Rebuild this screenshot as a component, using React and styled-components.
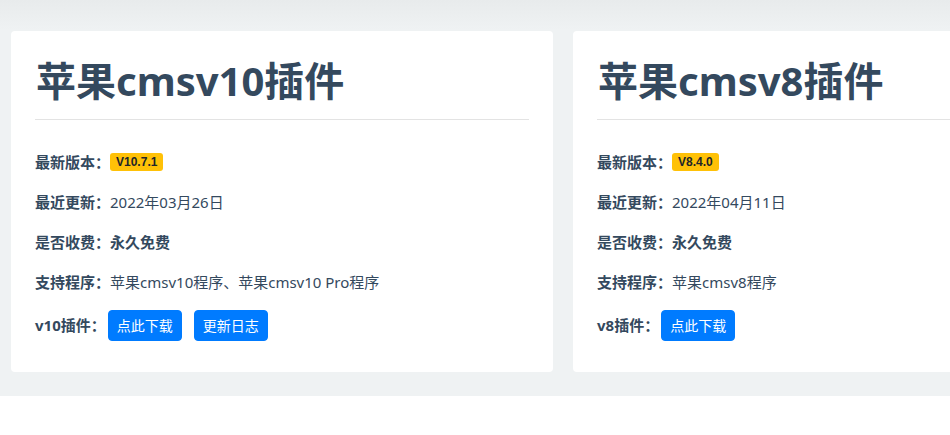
import React from 'react'
import styled, { createGlobalStyle } from 'styled-components'

const GlobalStyle = createGlobalStyle`
    html, body{
        margin: 0;
        padding: 0;
        background: #fff;
        overflow: hidden;
    }
    body{
        font-family: "Noto Sans", "Noto Sans CJK SC", sans-serif;
        font-size: 15px;
        color: #34495e;
    }
`;

const Section = styled.section`
    background: linear-gradient(180deg, #e8ebec 0px, #eff2f3 30px, #eff2f3 100%);
    padding: 31px 0 24px 11px;
`;
const CardTrack = styled.div`
    display: flex;
    gap: 20px;
`;
const Card = styled.div`
    flex: 0 0 542px;
    box-sizing: border-box;
    background: #fff;
    border-radius: 4px;
    padding: 24px;
`;
const Title = styled.h1`
    margin: 0 0 12px;
    font-size: 40px;
    line-height: 52px;
    font-weight: 700;
    color: #34495e;
    padding-left: 1px;
`;
const Divider = styled.hr`
    margin: 0 0 22px;
    border: 0;
    border-top: 1px solid #e3e3e3;
`;
const Row = styled.div`
    display: flex;
    align-items: center;
    height: ${p => p.$tall ? '46px' : '40px'};
    line-height: 22px;
`;
const Label = styled.span`
    font-weight: 700;
`;
const Value = styled.span`
    font-weight: ${p => p.$bold ? 700 : 400};
`;
const Badge = styled.span`
    display: inline-block;
    background: #ffc107;
    color: #212529;
    font-family: "Liberation Sans", Arial, sans-serif;
    font-size: 12px;
    font-weight: 700;
    line-height: 18px;
    padding: 0 6px;
    border-radius: 3px;
`;
const Buttons = styled.div`
    display: flex;
    gap: 12px;
    margin-left: 2px;
`;
const Button = styled.a`
    display: inline-block;
    background: #007bff;
    border: 1px solid #007bff;
    color: #fff;
    text-decoration: none;
    font-size: 14px;
    line-height: 21px;
    padding: 4px 8px;
    border-radius: 4px;
`;

const plugins = [
    {
        title: '苹果cmsv10插件',
        version: 'V10.7.1',
        date: '2022年03月26日',
        support: '苹果cmsv10程序、苹果cmsv10 Pro程序',
        tag: 'v10插件：',
        buttons: ['点此下载', '更新日志'],
    },
    {
        title: '苹果cmsv8插件',
        version: 'V8.4.0',
        date: '2022年04月11日',
        support: '苹果cmsv8程序',
        tag: 'v8插件：',
        buttons: ['点此下载'],
    },
]

function PluginCard({ item }) {
    return (
        <Card>
            <Title>{item.title}</Title>
            <Divider />
            <Row>
                <Label>最新版本：</Label>
                <Badge>{item.version}</Badge>
            </Row>
            <Row>
                <Label>最近更新：</Label>
                <Value>{item.date}</Value>
            </Row>
            <Row>
                <Label>是否收费：</Label>
                <Value $bold>永久免费</Value>
            </Row>
            <Row>
                <Label>支持程序：</Label>
                <Value>{item.support}</Value>
            </Row>
            <Row $tall>
                <Label>{item.tag}</Label>
                <Buttons>
                    {item.buttons.map(b => <Button href="#" key={b}>{b}</Button>)}
                </Buttons>
            </Row>
        </Card>
    )
}

export default function App() {
    return (
        <>
            <GlobalStyle />
            <Section>
                <CardTrack>
                    {plugins.map(p => <PluginCard item={p} key={p.title} />)}
                </CardTrack>
            </Section>
        </>
    )
}
